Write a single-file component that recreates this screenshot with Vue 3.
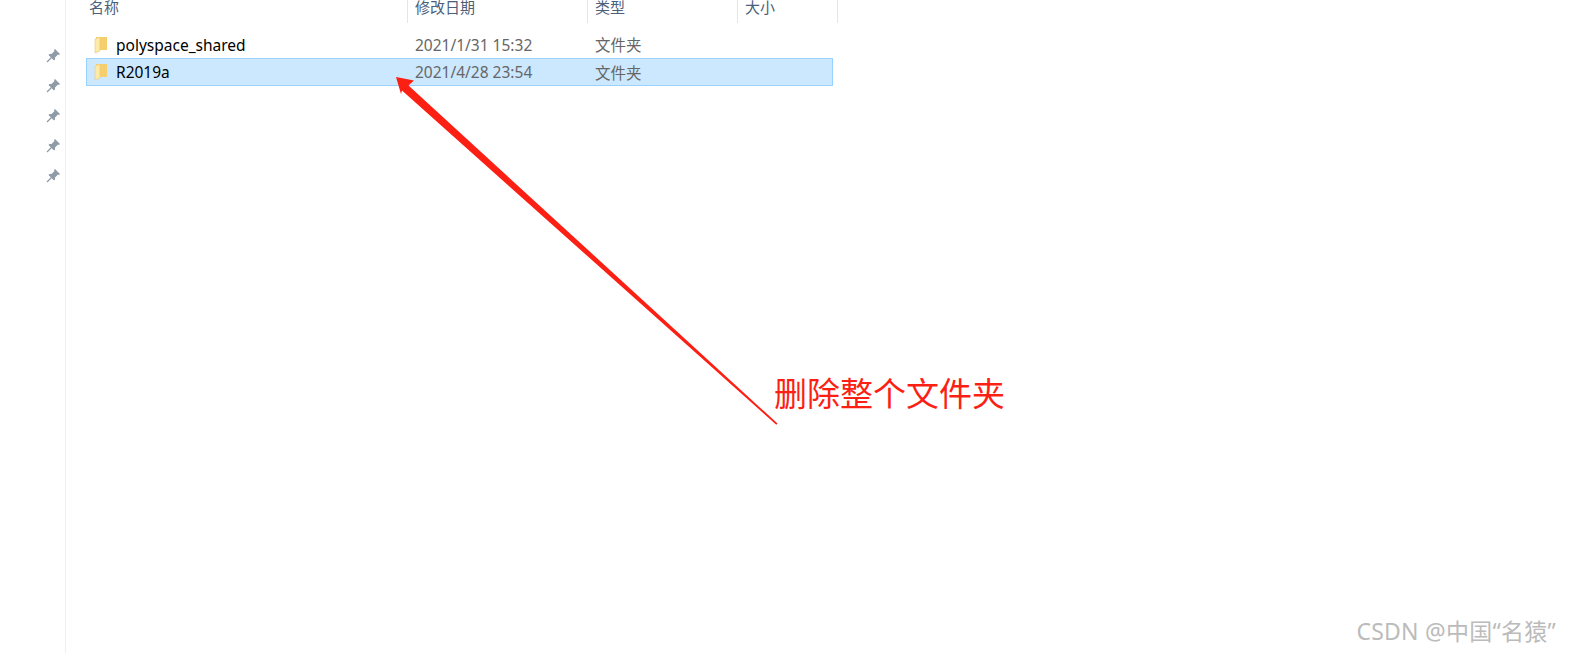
<script setup>
const rows = [
  { name: 'polyspace_shared', date: '2021/1/31 15:32', type: '文件夹', selected: false },
  { name: 'R2019a', date: '2021/4/28 23:54', type: '文件夹', selected: true },
];
const pins = [1, 2, 3, 4, 5];
</script>

<template>
  <div class="page">
    <aside class="nav">
      <svg v-for="p in pins" :key="p" class="pin" viewBox="0 0 14 14">
        <path d="M9 0L14 5L13 6L12 5.5L9 8.5L9 10.5L8 11.5L2.5 6L3.5 5L5.5 5L8.5 2L8 1Z" fill="#8f9ba6" />
        <path d="M5.5 8.5L1 13" stroke="#8f9ba6" stroke-width="1.3" fill="none" />
      </svg>
    </aside>

    <main class="list">
      <div class="head">
        <span class="col">名称</span>
        <span class="col">修改日期</span>
        <span class="col">类型</span>
        <span class="col">大小</span>
      </div>
      <div class="rows">
        <div v-for="row in rows" :key="row.name" class="row" :class="{ selected: row.selected }">
          <span class="name">
            <svg class="folder" viewBox="0 0 14 18">
              <path d="M2 1H13V14H2Z" fill="#f5cf6b" />
              <path d="M1 3L6 1V15L1 17Z" fill="#fde9a8" stroke="#e9c878" stroke-width="0.6" />
            </svg>
            {{ row.name }}
          </span>
          <span class="date">{{ row.date }}</span>
          <span class="date">{{ row.type }}</span>
        </div>
      </div>
    </main>

    <svg class="arrow" viewBox="0 0 1571 653">
      <path d="M396 77L414 80.5L408.5 85.5L777.5 423.5L776.3 424.7L402 90.5L401 94Z" fill="#fc1f14" />
    </svg>
    <div class="note">删除整个文件夹</div>
    <div class="mark">CSDN @中国“名猿”</div>
  </div>
</template>

<style scoped>
.page {
  position: relative;
  display: flex;
  height: 653px;
  overflow: hidden;
  background: #fff;
  font-family: "Noto Sans", "Noto Sans CJK SC", sans-serif;
}

.nav {
  width: 66px;
  flex: none;
  box-sizing: border-box;
  border-right: 1px solid #f0f0f0;
  padding: 49px 0 0 46px;
  display: flex;
  flex-direction: column;
  gap: 16px;
}

.pin {
  width: 14px;
  height: 14px;
}

.list {
  flex: 1;
  padding-left: 16px;
}

.head {
  display: grid;
  grid-template-columns: 326px 180px 150px 100px;
  width: 756px;
  height: 23px;
}

.col {
  padding-left: 7px;
  border-right: 1px solid #e5e5e5;
  font-size: 15px;
  line-height: 15px;
  color: #4c607a;
}

.rows {
  margin-top: 8px;
  margin-left: 4px;
  width: 747px;
}

.row {
  display: grid;
  grid-template-columns: 328px 180px 1fr;
  align-items: center;
  box-sizing: border-box;
  height: 27px;
  border: 1px solid transparent;
  font-size: 15.5px;
}

.row.selected {
  height: 28px;
  background: #cce8ff;
  border-color: #99d1ff;
}

.name {
  display: flex;
  align-items: center;
  gap: 8px;
  padding-left: 7px;
  color: #000;
}

.folder {
  width: 14px;
  height: 18px;
}

.date {
  color: #666;
}

.arrow {
  position: absolute;
  inset: 0;
  width: 1571px;
  height: 653px;
}

.note {
  position: absolute;
  left: 774px;
  top: 370px;
  font-size: 33px;
  line-height: 48px;
  color: #fc1f14;
}

.mark {
  position: absolute;
  right: 15px;
  top: 616px;
  font-size: 23px;
  line-height: 30px;
  letter-spacing: 0.25px;
  color: #bbb;
}
</style>
